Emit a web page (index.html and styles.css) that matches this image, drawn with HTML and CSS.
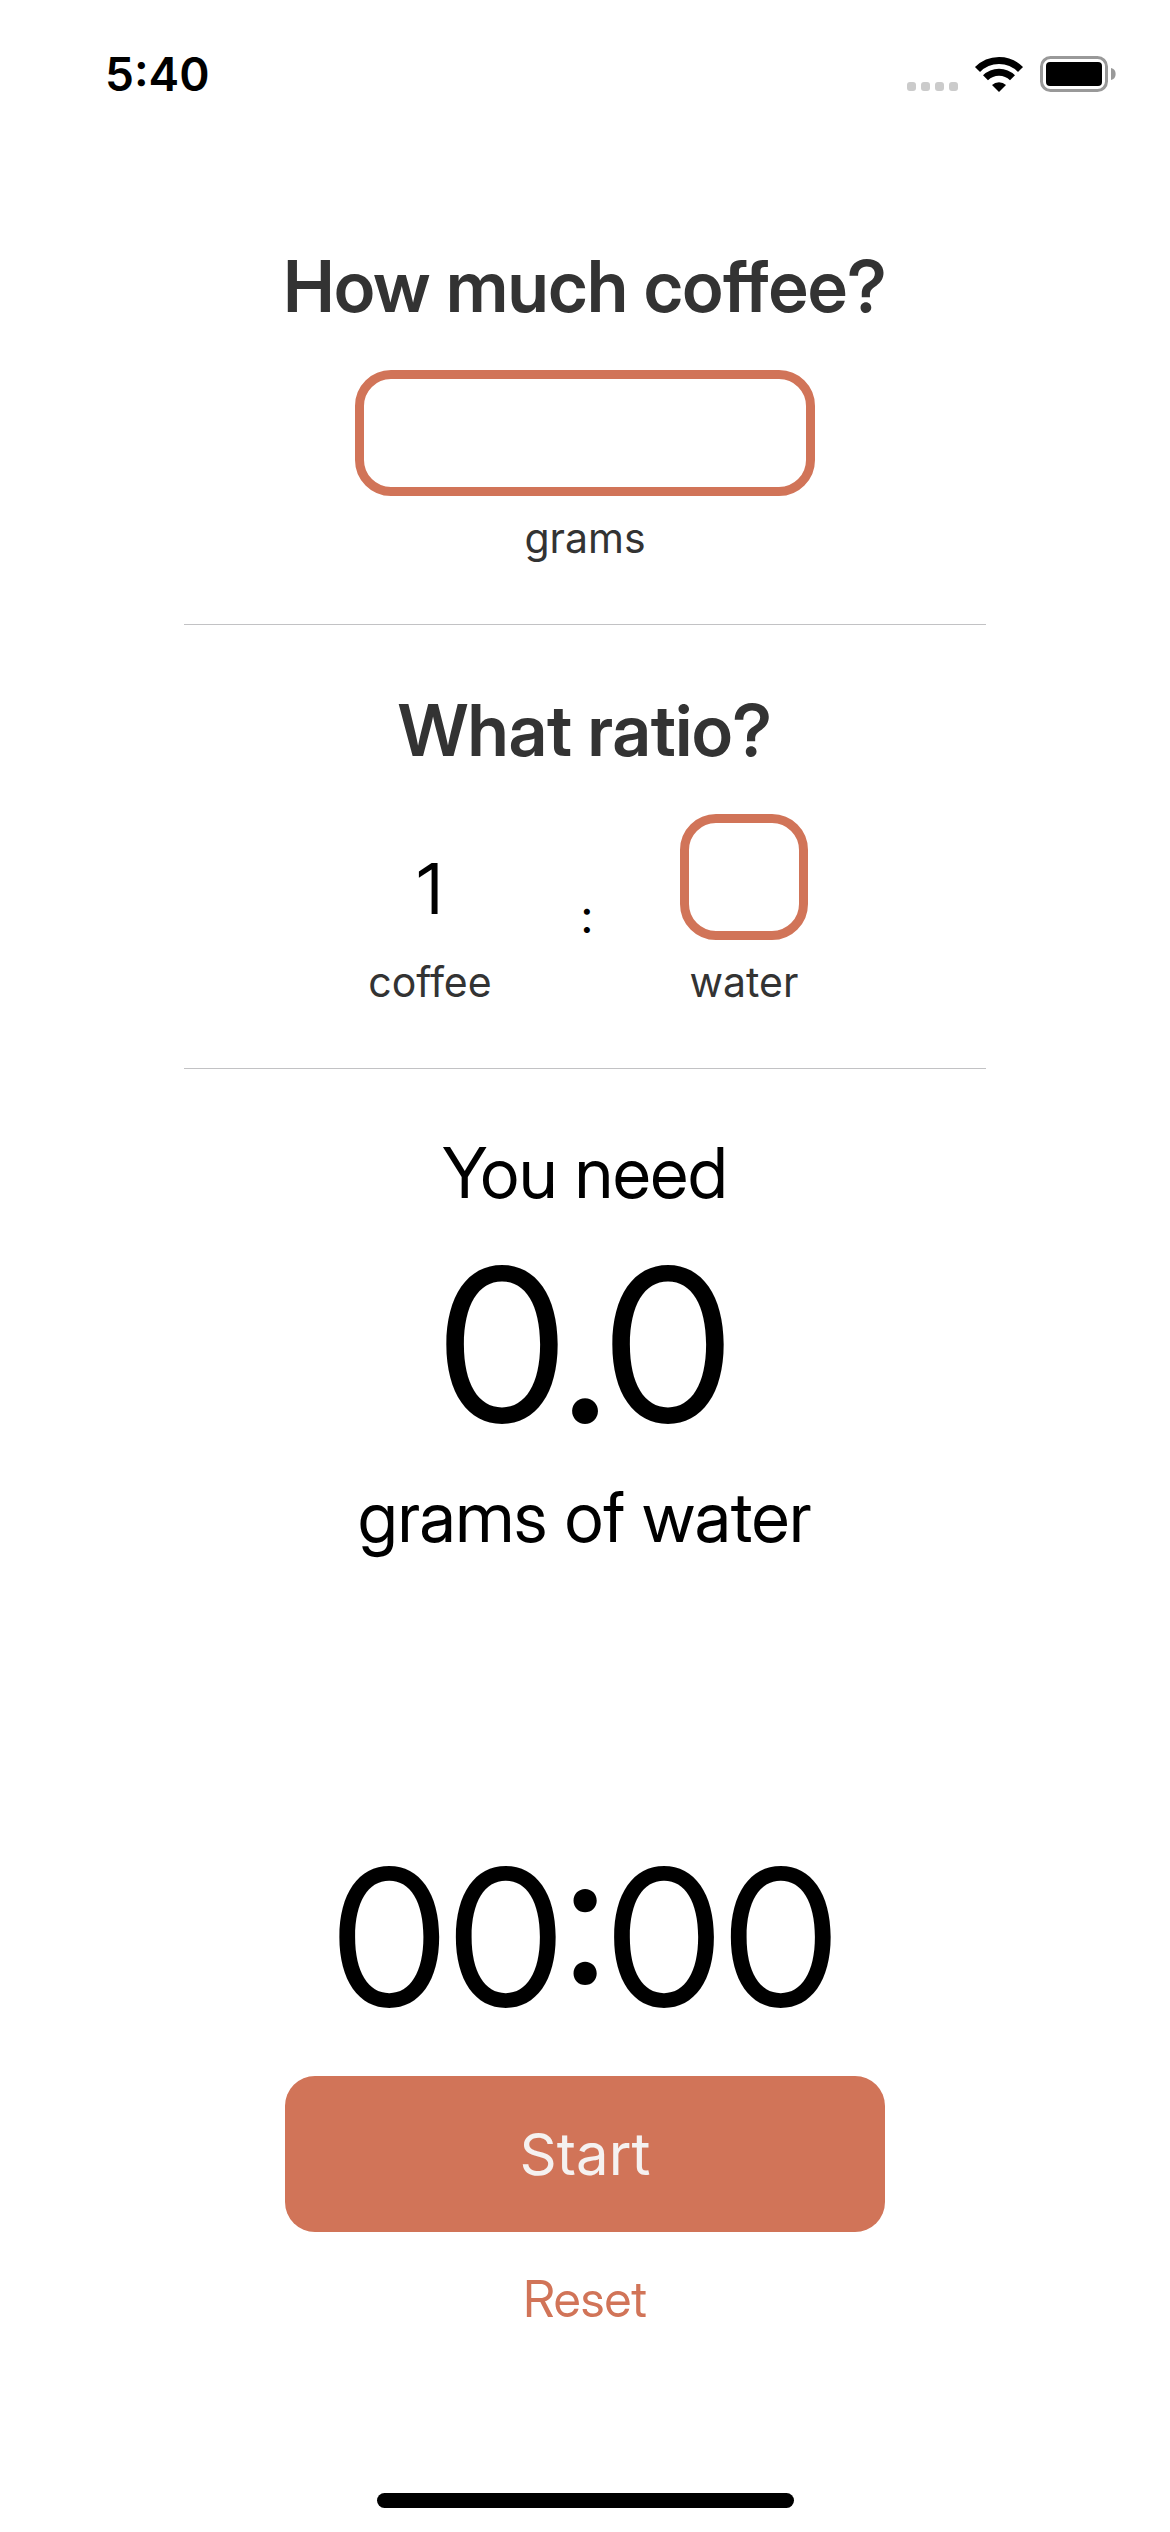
FILE: index.html
```html
<!DOCTYPE html>
<html lang="en">
<head>
<meta charset="utf-8">
<meta name="viewport" content="width=device-width, initial-scale=1">
<title>Coffee ratio</title>
<link rel="stylesheet" href="styles.css">
</head>
<body>
<header class="status">
  <time class="clock">5:40</time>
  <div class="indicators">
    <svg class="signal" width="52" height="10" viewBox="-1 -1 52 10" fill="#cbcbcb" aria-hidden="true"><rect width="9" height="9" rx="3"/><rect x="14" width="9" height="9" rx="3"/><rect x="28" width="9" height="9" rx="3"/><rect x="42" width="9" height="9" rx="3"/></svg>
    <svg width="50" height="36" viewBox="-1 0 50 36" aria-hidden="true"><g fill="none" stroke="#000" stroke-width="7"><path d="M2.500 13.500a30 30 0 0 1 43 0"/><path d="M10.500 21.800a19 19 0 0 1 27 0"/></g><path d="M17 29a10 10 0 0 1 14 0L24 36z"/></svg>
    <svg width="76" height="36" viewBox="0 0 76 36" aria-hidden="true"><rect x="1.500" y="1.500" width="65" height="33" rx="9" fill="none" stroke="#999" stroke-width="3"/><rect x="6" y="6" width="56" height="24" rx="4"/><path d="M71 12a6.200 6.200 0 0 1 0 12z" fill="#999"/></svg>
  </div>
</header>
<main class="app">
  <section class="panel">
    <h1 class="question"><label for="coffee">How much coffee?</label></h1>
    <input class="field" id="coffee" type="text" inputmode="decimal">
    <p class="unit">grams</p>
  </section>
  <section class="panel">
    <h2 class="question">What ratio?</h2>
    <div class="ratio">
      <div class="part"><span class="one">1</span><span class="unit">coffee</span></div>
      <span class="colon">:</span>
      <div class="part"><input class="field small" id="water" type="text" inputmode="decimal"><label class="unit" for="water">water</label></div>
    </div>
  </section>
  <section class="result">
    <p class="line">You need</p>
    <output class="amount" for="coffee water">0.0</output>
    <p class="line">grams of water</p>
  </section>
  <section class="timer">
    <time class="elapsed">00:00</time>
    <button class="start" type="button">Start</button>
    <button class="reset" type="button">Reset</button>
  </section>
</main>
<div class="home"></div>
</body>
</html>
```
FILE: styles.css
```css
* { box-sizing: border-box; margin: 0; padding: 0; }

body {
  min-height: 100vh;
  display: flex;
  flex-direction: column;
  background: #fff;
  color: #000;
  font-family: "Inter Display", Inter, "Liberation Sans", sans-serif;
}

/* Small text uses the text cut of the typeface */
.clock, .unit, .colon, .start { font-family: Inter, "Liberation Sans", sans-serif; }

/* Status bar */
.status { display: flex; justify-content: space-between; align-items: center; padding: 46px 54px 0 105px; }
.clock { font-size: 46px; line-height: 56px; font-weight: 600; }
.indicators { display: flex; align-items: center; gap: 16px; }
.signal { margin-top: 24px; }

/* Calculator */
.app { flex: 1; display: flex; flex-direction: column; align-items: center; padding: 79px 24px 164px; }
.panel {
  width: 100%;
  max-width: 802px;
  display: flex;
  flex-direction: column;
  align-items: center;
  padding: 57px 0 60px;
  border-bottom: 1px solid #c2c2c4;
}
.question { margin-bottom: 36px; color: #333; font-size: 71px; line-height: 96px; font-weight: 600; }
.field {
  width: 460px;
  max-width: 100%;
  height: 126px;
  border: 9px solid #d17458;
  border-radius: 36px;
  background: #fff;
  font: inherit;
  font-size: 70px;
  text-align: center;
}
.unit { margin-top: 16px; color: #333; font-size: 41px; line-height: 52px; }
.ratio { width: 100%; max-width: 446px; padding-left: 4px; display: flex; justify-content: space-between; align-items: flex-end; }
.part { width: 128px; display: flex; flex-direction: column; align-items: center; }
.small { width: 128px; }
.one { padding-top: 24px; font-size: 70px; line-height: 102px; }
.colon { margin-bottom: 62px; font-size: 46px; line-height: 60px; }

.result { display: flex; flex-direction: column; align-items: center; padding-top: 62px; }
.line { font-size: 70px; line-height: 84px; }
.amount { font-size: 212px; line-height: 260px; }

/* Timer */
.timer { width: 100%; margin-top: auto; display: flex; flex-direction: column; align-items: center; }
.elapsed { margin-bottom: 24px; font-size: 190px; line-height: 230px; }
.start {
  width: 100%;
  max-width: 600px;
  height: 156px;
  border: 0;
  border-radius: 30px;
  background: #d17458;
  color: #f5f1f0;
  font-size: 58px;
}
.reset { margin-top: 37px; border: 0; background: none; color: #d17458; font: inherit; font-size: 50px; line-height: 60px; }

.home { width: 417px; max-width: 50%; height: 15px; margin: 0 auto 24px; border-radius: 8px; background: #000; }
```
